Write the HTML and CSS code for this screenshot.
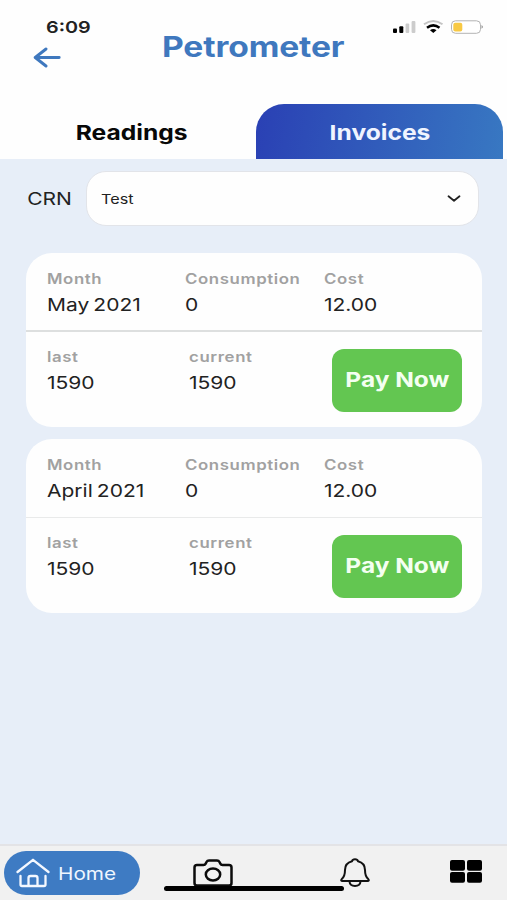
FILE: index.html
```html
<!DOCTYPE html>
<html lang="en">
<head>
<meta charset="utf-8">
<title>Petrometer</title>
<link rel="stylesheet" href="styles.css">
</head>
<body>
<div class="app">
  <header class="header">
    <div class="left">
      <span class="time wide">6:09</span>
      <svg class="back" width="28" height="22" viewBox="0 0 28 22"><path d="M13 2 2.200 10.500 13 19M2.500 10.500h23.700" fill="none" stroke="#3f78be" stroke-width="2.900" stroke-linecap="round" stroke-linejoin="round"/></svg>
    </div>
    <h1 class="title"><span class="wide">Petrometer</span></h1>
    <svg class="status" width="92" height="16" viewBox="0 0 92 16">
      <rect x="0" y="9.500" width="4" height="4.500" rx="1"/><rect x="6.300" y="7.300" width="4" height="6.700" rx="1"/>
      <rect x="12.600" y="4.500" width="3.600" height="9.500" rx="1" fill="#ccc"/><rect x="18.600" y="2" width="3.800" height="12" rx="1" fill="#ccc"/>
      <path d="M31 5.300Q40.300-1.300 49.500 5.300" fill="none" stroke="#c4c4c4" stroke-width="2"/>
      <path d="M34 8.800Q40.300 4 46.500 8.800" fill="none" stroke="#000" stroke-width="2.500"/>
      <path d="M37 11.200Q40.300 9 43.500 11.200L40.300 14Z"/>
      <rect x="58.500" y="1.800" width="29" height="12.500" rx="4" fill="#fff" stroke="#b3b3b3"/><rect x="60.300" y="3.700" width="9" height="8.700" rx="2" fill="#f8c944"/><path d="M88.500 6q3 1.900 0 3.800z" fill="#999"/>
    </svg>
  </header>
  <nav class="tabs">
    <div class="tab"><span class="wide readings">Readings</span></div>
    <div class="tab active"><span class="wide invoices">Invoices</span></div>
  </nav>
  <main class="content">
    <div class="crn"><span class="crn-label wide">CRN</span>
      <div class="select"><span class="wide">Test</span><svg width="14" height="9" viewBox="0 0 14 9"><path d="M1.500 2.300 7 6.800l5.500-4.500" fill="none" stroke="#222" stroke-width="1.800" stroke-linecap="round" stroke-linejoin="round"/></svg></div>
    </div>
    <section class="card">
      <div class="row summary">
        <div class="field"><span class="label wide">Month</span><span class="value wide">May 2021</span></div>
        <div class="field"><span class="label wide">Consumption</span><span class="value wide">0</span></div>
        <div class="field"><span class="label wide">Cost</span><span class="value wide">12.00</span></div>
      </div>
      <div class="row meter">
        <div class="field"><span class="label wide">last</span><span class="value wide">1590</span></div>
        <div class="field"><span class="label wide">current</span><span class="value wide">1590</span></div>
        <button class="pay"><span class="wide">Pay Now</span></button>
      </div>
    </section>
    <section class="card light">
      <div class="row summary">
        <div class="field"><span class="label wide">Month</span><span class="value wide">April 2021</span></div>
        <div class="field"><span class="label wide">Consumption</span><span class="value wide">0</span></div>
        <div class="field"><span class="label wide">Cost</span><span class="value wide">12.00</span></div>
      </div>
      <div class="row meter">
        <div class="field"><span class="label wide">last</span><span class="value wide">1590</span></div>
        <div class="field"><span class="label wide">current</span><span class="value wide">1590</span></div>
        <button class="pay"><span class="wide">Pay Now</span></button>
      </div>
    </section>
  </main>
  <footer class="nav">
    <div class="home"><svg width="34" height="30" viewBox="0 0 34 30" fill="none" stroke="#f4f8ff" stroke-width="2.300" stroke-linecap="round" stroke-linejoin="round"><path d="M1.500 14 17 1.800 32.500 14M4.500 18v8.500q0 1.500 1.500 1.500h22q1.500 0 1.500-1.500V18M12.500 28v-8q0-2 2-2h5q2 0 2 2v8"/></svg><span class="wide">Home</span></div>
    <svg class="camera" width="40" height="28" viewBox="0 0 40 28" fill="none" stroke="#0b0b0b" stroke-width="2.500" stroke-linejoin="round"><path d="M4 6h6.500q1.500 0 2.200-1.400l.8-1.600q.8-1.500 2.500-1.500h8q1.700 0 2.500 1.500l.8 1.600Q28 6 29.500 6H36q2.500 0 2.500 2.500v15.500q0 2.500-2.500 2.500H4q-2.500 0-2.500-2.500V8.500Q1.500 6 4 6Z"/><ellipse cx="20" cy="15.500" rx="7.200" ry="5.900"/></svg>
    <svg class="bell" width="30" height="30" viewBox="0 0 30 30" fill="none" stroke="#111" stroke-width="2" stroke-linejoin="round"><path d="M12 3.300Q12.500 1.200 15 1.200t3 2.100c4.500 1.200 7 4.600 7 8.700 0 5 .8 7 3.200 9q1.500 2-.7 2h-25q-2.200 0-.7-2C4.200 19 5 17 5 12c0-4.100 2.500-7.500 7-8.700ZM9.500 23.500c.5 6 10.500 6 11 0"/></svg>
    <svg class="grid" width="32" height="23" viewBox="0 0 32 23"><rect width="15" height="10.700" rx="2"/><rect x="17" width="15" height="10.700" rx="2"/><rect y="12.100" width="15" height="10.700" rx="2"/><rect x="17" y="12.100" width="15" height="10.700" rx="2"/></svg>
    <div class="indicator"></div>
  </footer>
</div>
</body>
</html>
```
FILE: styles.css
```css
* { box-sizing: border-box; }
body { margin: 0; font-family: Inter, "Liberation Sans", sans-serif; color: #222; }
.app { width: 507px; height: 900px; display: flex; flex-direction: column; background: #fefefe; overflow: hidden; }
.wide { display: inline-block; transform: scaleX(1.2); transform-origin: left center; white-space: nowrap; }
.header { height: 104px; display: flex; align-items: flex-start; }
.left { width: 162px; padding: 17px 0 0 33px; display: flex; flex-direction: column; }
.time { font-size: 16.5px; line-height: 20px; font-weight: 600; margin-left: 13px; }
.back { margin-top: 10px; }
.title { margin: 0; padding-top: 29px; width: 231px; font-size: 28px; line-height: 36px; font-weight: 700; letter-spacing: -0.1px; color: #3f78be; }
.status { margin-top: 19px; }
.tabs { height: 55px; flex: none; display: flex; gap: 4px; padding-right: 4px; }
.tab { flex: none; width: 252px; padding-top: 1px; display: flex; align-items: center; justify-content: center; font-size: 20.5px; font-weight: 700; color: #080808; }
.tab.active { width: 247px; color: #eff4ff; border-radius: 28px 28px 0 0; background: linear-gradient(100deg, #2a40b4, #3878c2); }
.tab .wide { transform-origin: center; }
.readings { margin-left: 11px; }
.content { flex: 1; background: #e7eef8; padding: 12px 25px 0 26px; }
.crn { display: flex; align-items: center; height: 54px; margin-bottom: 28px; }
.crn-label { width: 61px; padding-left: 1px; font-size: 17.500px; }
.select { width: 393px; height: 55px; margin-left: -1px; background: #fefefe; border: 1px solid #e2e4e9; border-radius: 20px; display: flex; align-items: center; justify-content: space-between; padding: 1px 17px 0 14px; font-size: 13.500px; }
.card { height: 174px; border-radius: 26px; background: #fefefe; margin-bottom: 12px; }
.row { display: flex; }
.summary { height: 78.500px; padding: 16px 0 0 20.500px; border-bottom: 2px solid #dddfdf; }
.light .summary { border-bottom: 1px solid #e9eaea; }
.meter { padding: 15px 0 0 20.500px; }
.field { display: flex; flex-direction: column; width: 138.500px; }
.meter .field { width: 142.750px; }
.label { font-size: 14px; line-height: 20px; font-weight: 600; letter-spacing: 0.5px; color: #a1a1a1; }
.value { font-size: 17.500px; line-height: 24px; margin-top: 4px; word-spacing: -1.5px; }
.pay { width: 130px; height: 63px; margin: 2px 0 0; padding: 0; border: 0; border-radius: 12px; background: #63c651; color: #f4fff1; font: 700 20.400px/24px Inter, sans-serif; }
.pay .wide { transform-origin: center; }
.nav { position: relative; height: 56px; flex: none; background: #f1f1f1; border-top: 2px solid #e3e3e6; display: flex; align-items: flex-start; }
.home { width: 136px; height: 44px; margin: 5px 53px 0 4px; border-radius: 22px; background: #3e7bc3; color: #eff6ff; display: flex; align-items: center; padding-left: 12px; gap: 8px; font-size: 17.300px; }
.camera { margin-top: 13px; }
.bell { margin: 12px 0 0 107px; }
.grid { margin: 14px 0 0 80px; }
.indicator { position: absolute; left: 164px; top: 40px; width: 180px; height: 5px; border-radius: 3px; background: #000; }
```
